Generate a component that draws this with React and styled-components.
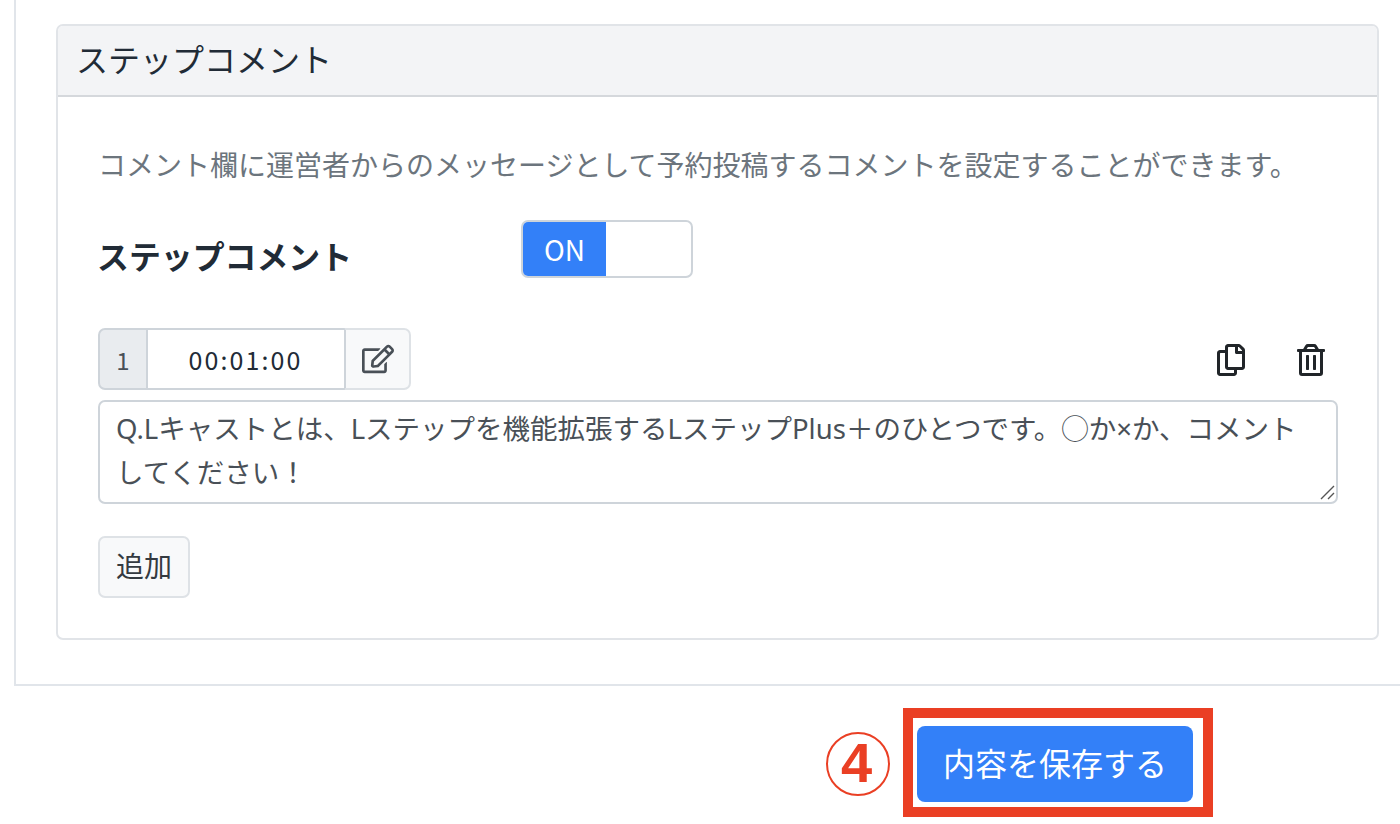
import React from "react";
import styled, { createGlobalStyle } from "styled-components";
import { FaRegEdit, FaRegCopy, FaRegTrashAlt } from "react-icons/fa";

const FONT = `"Noto Sans CJK JP", "Noto Sans", sans-serif`;

const Global = createGlobalStyle`
  html, body { margin: 0; padding: 0; background: #fff; }
  body { font-family: ${FONT}; overflow: hidden; }
  * { box-sizing: border-box; }
`;

const Page = styled.div`
  width: 1400px;
  height: 824px;
  overflow: hidden;
`;

const Panel = styled.section`
  width: 1500px;
  height: 686px;
  margin-left: 14px;
  padding: 24px 0 0 40px;
  border-left: 2px solid #e1e5ea;
  border-bottom: 2px solid #e1e5ea;
`;

const Card = styled.div`
  width: 1323px;
  height: 616px;
  border: 2px solid #e1e4e8;
  border-radius: 7px;
  overflow: hidden;
`;

const CardHeader = styled.h2`
  margin: 0;
  height: 71px;
  padding: 0 0 6px 18px;
  display: flex;
  align-items: center;
  background: #f3f4f6;
  border-bottom: 2px solid #d5d8dc;
  color: #212b36;
  font-size: 32px;
  font-weight: 400;
`;

const CardBody = styled.div`
  padding: 50px 40px 0;
`;

const Description = styled.p`
  margin: 0;
  height: 40px;
  line-height: 34px;
  font-size: 28px;
  color: #6c757d;
  white-space: nowrap;
`;

const ToggleRow = styled.div`
  margin-top: 33px;
  height: 58px;
  display: flex;
  align-items: flex-start;
`;

const ToggleLabel = styled.div`
  width: 423px;
  margin-top: 11px;
  line-height: 48px;
  font-size: 31.9px;
  font-weight: 700;
  color: #212b36;
  text-indent: -1px;
`;

const Toggle = styled.div`
  width: 172px;
  height: 58px;
  border: 2px solid #ced4da;
  border-radius: 7px;
  overflow: hidden;
  background: #fff;
`;

const ToggleOn = styled.div`
  width: 83px;
  height: 100%;
  background: #3380f8;
  color: #fff;
  font-size: 28px;
  display: flex;
  align-items: center;
  justify-content: center;
`;

const StepRow = styled.div`
  margin-top: 50px;
  display: flex;
  align-items: flex-start;
  justify-content: space-between;
`;

const TimeGroup = styled.div`
  display: flex;
  height: 62px;
  width: 313px;
`;

const Index = styled.div`
  width: 50px;
  background: #e9ecef;
  border: 2px solid #ced4da;
  border-radius: 7px 0 0 7px;
  color: #495057;
  font-size: 24px;
  display: flex;
  align-items: center;
  justify-content: center;
`;

const TimeInput = styled.div`
  width: 197px;
  padding-right: 2px;
  background: #fff;
  border-top: 2px solid #ced4da;
  border-bottom: 2px solid #ced4da;
  color: #212b36;
  font-size: 25px;
  letter-spacing: 2.1px;
  display: flex;
  align-items: center;
  justify-content: center;
`;

const EditButton = styled.div`
  width: 67px;
  margin-left: -1px;
  background: #f8f9fa;
  border: 2px solid #dee2e6;
  border-left-color: #ced4da;
  border-radius: 0 7px 7px 0;
  color: #495057;
  font-size: 32px;
  display: flex;
  align-items: center;
  justify-content: center;
`;

const IconGroup = styled.div`
  display: flex;
  gap: 48px;
  padding: 16px 10px 0 0;
  color: #212529;
  font-size: 32px;
  line-height: 0;
`;

const CommentWrap = styled.div`
  position: relative;
  width: 1240px;
  height: 104px;
  margin-top: 10px;
`;

const CommentBox = styled.textarea`
  display: block;
  width: 100%;
  height: 100%;
  padding: 5px 16px;
  border: 2px solid #ced4da;
  border-radius: 7px;
  font-family: "Noto Sans", "Noto Sans CJK JP", sans-serif;
  font-size: 27.5px;
  line-height: 44px;
  color: #495057;
  background: #fff;
  outline: none;
  resize: none;
`;

const ResizeGrip = styled.svg`
  position: absolute;
  right: 3px;
  bottom: 4px;
  width: 15px;
  height: 15px;
`;

const AddButton = styled.div`
  width: 92px;
  height: 62px;
  margin-top: 32px;
  padding-bottom: 5px;
  background: #f8f9fa;
  border: 2px solid #dee2e6;
  border-radius: 7px;
  color: #343a40;
  font-size: 28px;
  display: flex;
  align-items: center;
  justify-content: center;
`;

const Footer = styled.div`
  margin-top: 22px;
  padding-right: 187px;
  display: flex;
  justify-content: flex-end;
  align-items: center;
  gap: 13px;
`;

const StepBadge = styled.div`
  width: 64px;
  height: 64px;
  margin-top: 2px;
  padding: 0 3px 2px 0;
  border: 2px solid #ea3f24;
  border-radius: 50%;
  color: #ea3f24;
  font-family: "Liberation Sans", sans-serif;
  font-size: 56px;
  font-weight: 700;
  display: flex;
  align-items: center;
  justify-content: center;
`;

const Highlight = styled.div`
  width: 310px;
  height: 109px;
  border: 10px solid #ea3f24;
  padding: 8px 0 0 4px;
`;

const SaveButton = styled.div`
  width: 276px;
  height: 76px;
  padding-bottom: 4px;
  background: #3380f8;
  border-radius: 8px;
  color: #fff;
  font-size: 32px;
  display: flex;
  align-items: center;
  justify-content: center;
`;

export default function App() {
  return (
    <Page>
      <Global />
      <Panel>
        <Card>
          <CardHeader>ステップコメント</CardHeader>
          <CardBody>
            <Description>
              コメント欄に運営者からのメッセージとして予約投稿するコメントを設定することができます。
            </Description>
            <ToggleRow>
              <ToggleLabel>ステップコメント</ToggleLabel>
              <Toggle>
                <ToggleOn>ON</ToggleOn>
              </Toggle>
            </ToggleRow>
            <StepRow>
              <TimeGroup>
                <Index>1</Index>
                <TimeInput>00:01:00</TimeInput>
                <EditButton>
                  <FaRegEdit />
                </EditButton>
              </TimeGroup>
              <IconGroup>
                <FaRegCopy />
                <FaRegTrashAlt />
              </IconGroup>
            </StepRow>
            <CommentWrap>
              <CommentBox
                readOnly
                defaultValue="Q.Lキャストとは、Lステップを機能拡張するLステップPlus＋のひとつです。◯か×か、コメントしてください！"
              />
              <ResizeGrip viewBox="0 0 15 15">
                <path d="M1 14 L14 1 M8 14 L14 8" stroke="#555" strokeWidth="1.4" fill="none" />
              </ResizeGrip>
            </CommentWrap>
            <AddButton>追加</AddButton>
          </CardBody>
        </Card>
      </Panel>
      <Footer>
        <StepBadge>4</StepBadge>
        <Highlight>
          <SaveButton>内容を保存する</SaveButton>
        </Highlight>
      </Footer>
    </Page>
  );
}
